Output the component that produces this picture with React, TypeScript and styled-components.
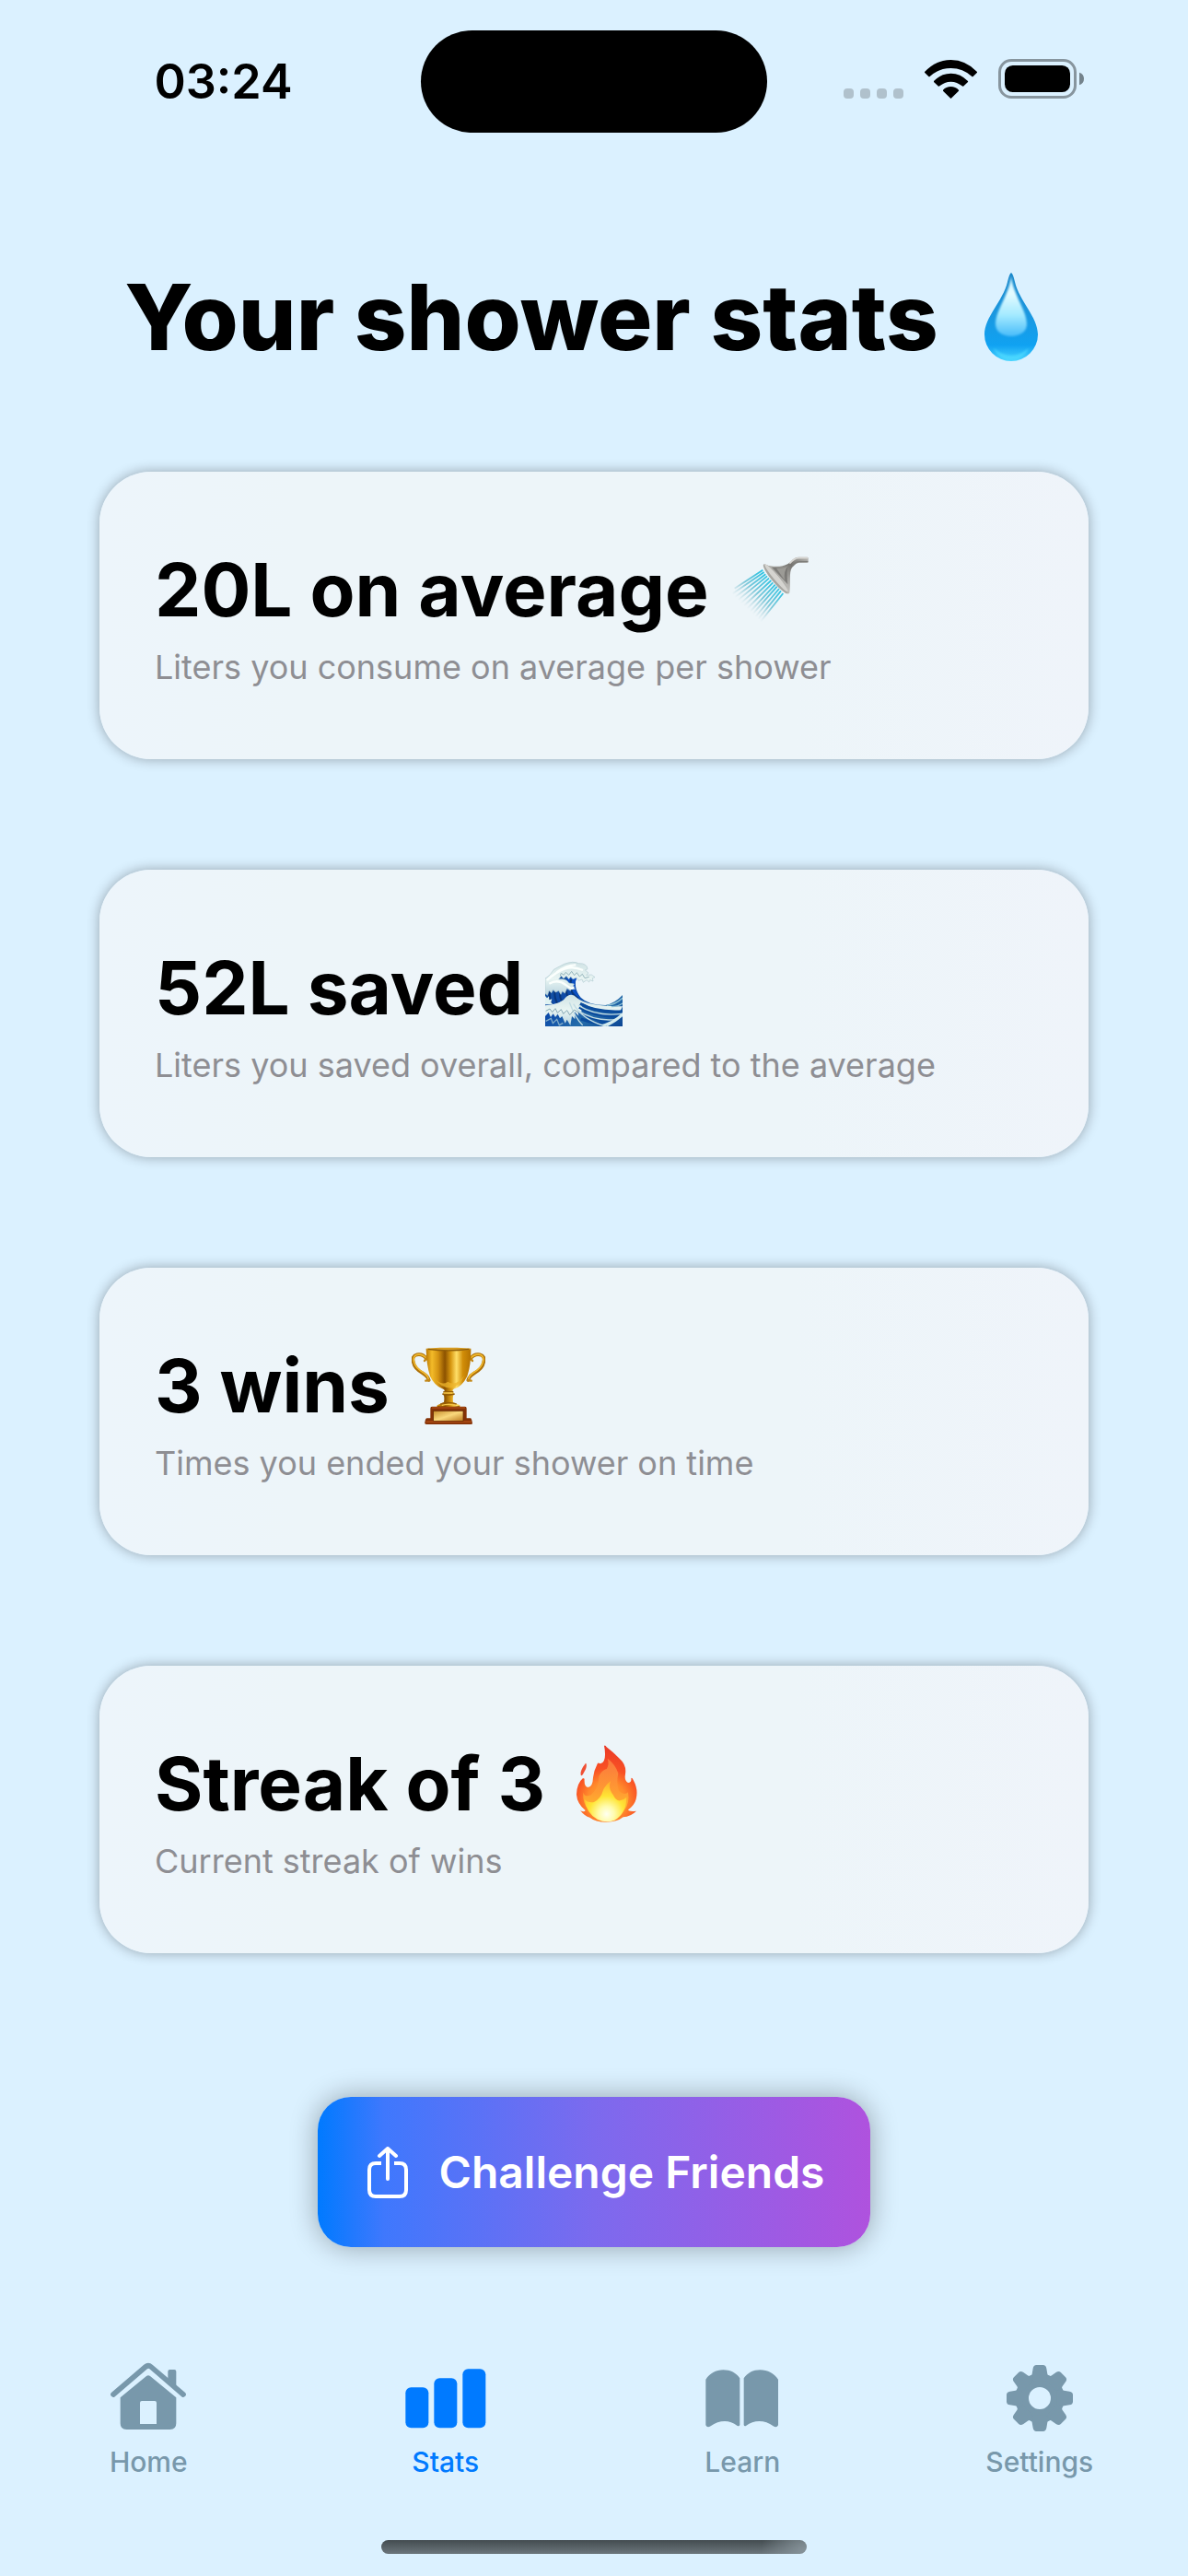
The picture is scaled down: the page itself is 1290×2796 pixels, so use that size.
import React from "react";
import styled, { createGlobalStyle } from "styled-components";

const GlobalStyle = createGlobalStyle`
  *, *::before, *::after { box-sizing: border-box; }
  body {
    margin: 0;
    background: #dbf1ff;
    color: #000;
    font-family: Inter, "Liberation Sans", sans-serif;
  }
`;

const Screen = styled.div`
  display: flex;
  flex-direction: column;
  min-height: 100vh;
  background: #dbf1ff;
`;

const StatusBar = styled.header`
  display: grid;
  grid-template-columns: 1fr 376px 1fr;
  align-items: center;
  padding-top: 33px;
`;

const Clock = styled.time`
  padding-left: 28px;
  text-align: center;
  font-size: 52px;
  line-height: 64px;
  font-weight: 600;
`;

const Island = styled.div`
  height: 111px;
  border-radius: 56px;
  background: #000;
`;

const StatusIcons = styled.div`
  display: flex;
  align-items: flex-end;
  padding: 0 0 6px 83px;

  svg { display: block; flex: none; }
  svg + svg { margin-left: 23px; }
`;

const Dots = styled.div`
  display: flex;
  gap: 7px;
  margin-right: 23px;
`;

const Dot = styled.span`
  width: 11px;
  height: 11px;
  border-radius: 4px;
  background: #b0c1cc;
`;

const Main = styled.main`
  display: flex;
  flex-direction: column;
  align-items: center;
  flex: 1;
  padding: 140px 108px 0;
`;

const Title = styled.h1`
  display: flex;
  align-items: center;
  gap: 50px;
  margin: 0 0 108px;
  padding-right: 28px;
  font-size: 99px;
  line-height: 120px;
  font-weight: 800;
  white-space: nowrap;

  svg { display: block; flex: none; }
`;

const CardList = styled.ul`
  display: flex;
  flex-direction: column;
  gap: 120px;
  width: 100%;
  margin: 0;
  padding: 0;
  list-style: none;
`;

const Card = styled.li`
  display: flex;
  flex-direction: column;
  padding: 76px 60px;
  border-radius: 56px;
  background: linear-gradient(90deg, #edf5fb, #edf5f9 20%, #edf5f9 70%, #eff4fa);
  box-shadow: 0 0 14px rgba(0, 0, 0, 0.32);
`;

const CardTitle = styled.h2`
  display: flex;
  align-items: center;
  gap: ${(p: { $gap: number }) => p.$gap}px;
  margin: 0;
  font-size: 80px;
  line-height: 104px;
  font-weight: 700;
  white-space: nowrap;

  svg { display: block; flex: none; }
`;

const CardNote = styled.p`
  margin: 8px 0 0;
  color: #8e8e93;
  font-size: 36px;
  line-height: 48px;
`;

const ShareButton = styled.button`
  display: flex;
  align-items: center;
  gap: 34px;
  height: 163px;
  margin-top: 156px;
  padding: 0 50px 0 54px;
  border: 0;
  border-radius: 36px;
  background: linear-gradient(90deg, #007aff, #3f78fd 12%, #7c6aee 50%, #af52de);
  box-shadow: 0 0 30px rgba(0, 0, 0, 0.33);
  color: #fff;
  font: 600 48px/64px Inter, "Liberation Sans", sans-serif;
  white-space: nowrap;

  svg { display: block; flex: none; }
`;

const TabBar = styled.nav`
  display: grid;
  grid-template-columns: repeat(4, 1fr);
`;

const Tab = styled.a`
  display: flex;
  flex-direction: column;
  align-items: center;
  gap: 13px;
  color: ${(p: { $active?: boolean }) => (p.$active ? "#007aff" : "#7898ab")};
  font-size: 30px;
  line-height: 40px;
  font-weight: 500;
  text-decoration: none;

  svg { display: block; }
`;

const HomeIndicator = styled.div`
  width: 462px;
  height: 15px;
  margin: 65px auto 24px;
  border-radius: 8px;
  background:
    radial-gradient(circle at 100% 100%, #88959c, rgba(136, 149, 156, 0) 50px),
    linear-gradient(#434c50, #6c767c);
`;

const WifiIcon = () => (
  <svg width="57" height="42" viewBox="342 75 171 126" aria-label="Wi-Fi" role="img">
    <path d="M342 114Q379 75 427.500 75T513 114Q514 115 513 116L500 129Q498 131 496 129Q467 102 427.500 102T359 129Q357 131 355 129L342 116Z" />
    <path d="M372 144Q396 119 427.500 119T483 144Q484 145 483 147L468 161Q466 162 464 160Q448 146 427.500 146T391 160Q389 162 387 161L372 147Z" />
    <path d="M402 173Q412 162 427.500 162T453 173Q454 175 453 176L430 199Q427.500 202 425 199L402 176Z" />
  </svg>
);

const BatteryIcon = () => (
  <svg width="93" height="43" viewBox="0 0 279 129" aria-label="Battery" role="img">
    <rect x="4.500" y="4.500" width="246" height="120" rx="38" fill="none" stroke="#87959e" strokeWidth="9" />
    <rect x="21" y="21" width="213" height="87" rx="26" />
    <path d="M264 44Q279 49 279 64.500T264 85Z" fill="#74838c" />
  </svg>
);

const Droplet = () => (
  <svg width="58" height="96" viewBox="0 0 58 96" aria-label="droplet" role="img">
    <defs>
      <linearGradient id="dropBody" x1="0" y1="0" x2="0" y2="1">
        <stop offset="0" stopColor="#1585c8" />
        <stop offset=".45" stopColor="#1b97df" />
        <stop offset=".82" stopColor="#10a2f2" />
        <stop offset="1" stopColor="#4ad4ff" />
      </linearGradient>
      <linearGradient id="dropShine" x1="0" y1="0" x2="0" y2="1">
        <stop offset="0" stopColor="#cdf3ff" />
        <stop offset=".3" stopColor="#e4fbff" />
        <stop offset=".65" stopColor="#a4eaff" />
        <stop offset="1" stopColor="#49bcfa" />
      </linearGradient>
      <filter id="dropSoft"><feGaussianBlur stdDeviation="1.200" /></filter>
    </defs>
    <path d="M29 0Q31 1 33 10C38 31 58 48 58 67A29 29 0 0 1 0 67C0 48 20 31 25 10Q27 1 29 0Z" fill="url(#dropBody)" />
    <path d="M29 3C31 24 46 41 46 56C46 64 38 69 29 69S12 64 12 56C12 41 27 24 29 3Z" fill="url(#dropShine)" filter="url(#dropSoft)" />
    <path d="M10 82Q29 98 48 82Q42 95 29 95T10 82Z" fill="#4ddaff" opacity=".75" filter="url(#dropSoft)" />
  </svg>
);

const Shower = () => (
  <svg width="84" height="72" viewBox="42 48 252 216" aria-label="shower" role="img">
    <defs>
      <linearGradient id="spray" gradientUnits="userSpaceOnUse" x1="185" y1="125" x2="95" y2="220">
        <stop offset="0" stopColor="#22c3e4" />
        <stop offset=".55" stopColor="#68bfd3" stopOpacity=".85" />
        <stop offset="1" stopColor="#a5c7d1" stopOpacity="0" />
      </linearGradient>
      <linearGradient id="showerMetal" x1="0" y1="1" x2="1" y2="0">
        <stop offset="0" stopColor="#e0dfdb" />
        <stop offset=".4" stopColor="#b4b3af" />
        <stop offset=".7" stopColor="#74736f" />
        <stop offset="1" stopColor="#bab9b5" />
      </linearGradient>
    </defs>
    <g stroke="url(#spray)" strokeWidth="5.500" fill="none">
      <path d="M145 92L53 152M149 99L47 169M154 106L48 185M159 112L52 200M165 119L60 212M172 126L69 222M178 133L79 233M185 140L89 243M191 146L99 250M198 153L111 256M204 160L124 259M211 168L137 261" />
    </g>
    <path d="M151 74C175 82 205 84 227 72L236 65Q248 50 262 50H290Q293 50 293 53V65Q293 68 290 68H262Q253 69 246 78L240 84C229 99 237 136 232 166Q230 173 218 167Z" fill="url(#showerMetal)" />
    <path d="M232 71Q249 52 264 53H291" fill="none" stroke="#d7d6d2" strokeWidth="5" />
    <path d="M240 80Q251 65 264 65H292" fill="none" stroke="#7d7d79" strokeWidth="4" />
    <path d="M174 83Q216 87 226 80Q222 93 226 139Z" fill="#6b6a66" opacity=".7" />
    <path d="M189 86Q215 88 227 79Q212 96 216 125Z" fill="#9c9b96" />
    <ellipse cx="187" cy="120" rx="13" ry="61" fill="#a7a6a1" transform="rotate(-40 187 120)" />
    <ellipse cx="189" cy="118" rx="8" ry="59" fill="#d5d4d0" transform="rotate(-40 189 118)" />
  </svg>
);

const Wave = () => (
  <svg width="84" height="84" viewBox="42 0 252 252" aria-label="wave" role="img">
    <defs>
      <linearGradient id="sea" x1="0" y1="0" x2="1" y2="1">
        <stop offset="0" stopColor="#245f9b" />
        <stop offset=".4" stopColor="#0b48a8" />
        <stop offset=".7" stopColor="#256caa" />
        <stop offset="1" stopColor="#0b4594" />
      </linearGradient>
      <linearGradient id="foam" x1="0" y1="0" x2="0" y2="1">
        <stop offset="0" stopColor="#d0e3e5" />
        <stop offset=".5" stopColor="#e9f5f3" />
        <stop offset="1" stopColor="#bad5df" />
      </linearGradient>
    </defs>
    <path d="M42 97L88 65L147 81Q130 125 158 158Q183 183 238 183Q268 178 294 150V252H42Z" fill="url(#sea)" />
    <path d="M113 93L145 95Q127 130 161 164Q115 158 113 93Z" fill="#0b4fc3" />
    <path d="M57 136Q54 165 64 182M74 134Q70 160 83 179M91 141Q88 159 99 174M111 136Q111 153 123 165M127 98Q115 139 150 161" fill="none" stroke="#09367b" strokeWidth="6" />
    <path d="M42 97Q60 85 70 67Q88 57 104 49Q133 38 151 47Q178 46 180 65L172 69L183 78L176 85L193 84L204 92L196 95L198 105L188 101L185 108L177 101L166 109L162 99L151 103L145 93L132 98L125 90L119 98L111 88L102 96L94 87L86 99Q111 96 119 111L136 114L132 122L139 131L128 129L124 136L113 128L106 144L98 137L93 148L86 136L76 141L68 133L62 143L55 135L49 151L42 145Z" fill="url(#foam)" stroke="#b2cbd2" strokeWidth="2" />
    <path d="M48 102Q77 75 105 65T165 69M55 113Q83 97 109 117T133 122M79 76Q112 51 142 52" fill="none" stroke="#fbfffd" strokeWidth="7" />
    <path d="M91 87L94 79L103 85L109 76L119 85L128 73L137 86L145 77L154 90L163 82L171 95L185 91" fill="none" stroke="#96b6bd" strokeWidth="3" />
    <path d="M42 184Q81 181 102 166Q124 137 145 159Q177 187 294 187L286 203Q226 210 165 178Q158 195 160 215L149 203L151 218L138 205L139 229L129 219L124 249L113 230L107 242L97 219L90 226L83 212L75 222L68 211L60 222L53 207L42 219Z" fill="url(#foam)" />
    <path d="M156 178Q207 208 294 203M153 190Q205 224 294 219M157 208Q204 234 273 239M158 228Q201 243 244 244" fill="none" stroke="#0b4c9d" strokeWidth="9" />
    <path d="M150 184Q213 222 291 211M147 200Q209 239 277 229M134 179Q163 231 240 252M121 174Q142 229 164 248" fill="none" stroke="#c1dce3" strokeWidth="4" />
    <path d="M219 248Q262 238 294 207V220Q270 241 246 252Z" fill="#d4ebee" />
    <path d="M42 153L48 160L54 154L55 166L64 163L61 174L67 181H42Z" fill="#dff2f2" />
    <path d="M243 184Q270 182 294 160M258 188Q279 188 294 177" fill="none" stroke="#8fc3d7" strokeWidth="4" />
    <path d="M44 202L57 195L65 206L75 194L82 208L94 197L101 211L113 200L122 215L137 198L151 208" fill="none" stroke="#87a9b5" strokeWidth="3" />
    <path d="M44 235L61 226L67 242L80 229L88 248L100 241" fill="none" stroke="#81acc8" strokeWidth="4" />
  </svg>
);

const Trophy = () => (
  <svg width="80" height="84" viewBox="51 35 240 252" aria-label="trophy" role="img">
    <defs>
      <linearGradient id="gold" x1="0" y1="0" x2="1" y2="0">
        <stop offset="0" stopColor="#b97600" />
        <stop offset=".13" stopColor="#f3bb29" />
        <stop offset=".27" stopColor="#d49312" />
        <stop offset=".42" stopColor="#8c5200" />
        <stop offset=".55" stopColor="#d79710" />
        <stop offset=".68" stopColor="#ffdf68" />
        <stop offset=".82" stopColor="#d18d08" />
        <stop offset="1" stopColor="#b37100" />
      </linearGradient>
      <linearGradient id="plate" x1="0" y1="0" x2="1" y2="1">
        <stop offset="0" stopColor="#c78e2b" />
        <stop offset=".5" stopColor="#f9d87c" />
        <stop offset="1" stopColor="#bd7b20" />
      </linearGradient>
    </defs>
    <g fill="none" strokeLinecap="round">
      <path d="M99 73Q88 57 69 60Q50 65 57 86Q60 105 88 121Q104 131 107 143M243 73Q254 57 273 60Q292 65 285 86Q282 105 254 121Q238 131 235 143" stroke="#ad7008" strokeWidth="11" />
      <path d="M98 71Q86 57 69 60Q53 66 59 85Q63 103 90 119Q106 130 106 142M244 71Q256 57 273 60Q289 66 283 85Q279 103 252 119Q236 130 236 142" stroke="#f1b92e" strokeWidth="5" />
      <path d="M93 80L99 72M249 80L243 72M97 145L108 143M245 145L234 143" stroke="#c38716" strokeWidth="7" />
    </g>
    <path d="M98 40H244Q245 92 232 130Q216 163 190 171Q180 176 188 184V190Q184 195 186 215L208 225Q211 233 203 235H139Q131 233 134 225L156 215Q159 195 154 190V184Q164 176 151 171Q124 159 111 130Q99 92 98 40Z" fill="url(#gold)" />
    <ellipse cx="171" cy="42" rx="73" ry="5" fill="#d69b21" />
    <path d="M104 42Q171 51 238 42" fill="none" stroke="#8f5d09" strokeWidth="4" />
    <path d="M124 135Q147 164 169 148Q195 166 223 128Q207 162 183 168Q148 172 124 135Z" fill="#edb62c" opacity=".75" />
    <path d="M154 181H187M151 188Q171 194 191 188M145 221Q171 212 197 221M135 229Q171 237 207 229" fill="none" stroke="#925a04" strokeWidth="4" />
    <path d="M155 185H184M149 225Q171 219 194 225" fill="none" stroke="#f6c648" strokeWidth="4" />
    <path d="M117 229H225Q230 229 230 235V267H243Q247 268 249 285Q249 287 243 287H99Q92 287 94 280Q96 267 101 267H112V235Q112 229 117 229Z" fill="#843207" />
    <path d="M98 279H245" stroke="#a94813" strokeWidth="6" />
    <path d="M117 233H225" stroke="#a94a13" strokeWidth="4" />
    <rect x="122" y="243" width="97" height="33" fill="url(#plate)" stroke="#5e2502" strokeWidth="2" />
  </svg>
);

const Fire = () => (
  <svg width="66" height="84" viewBox="80 39 198 252" aria-label="fire" role="img">
    <defs>
      <radialGradient id="flameOuter" gradientUnits="userSpaceOnUse" cx="179" cy="220" r="180">
        <stop offset="0" stopColor="#ffb52b" />
        <stop offset=".35" stopColor="#ff8a2c" />
        <stop offset=".58" stopColor="#f95124" />
        <stop offset="1" stopColor="#e93827" />
      </radialGradient>
      <linearGradient id="flameMid" x1="0" y1="0" x2="0" y2="1">
        <stop offset="0" stopColor="#fa773e" />
        <stop offset=".55" stopColor="#ff9b32" />
        <stop offset="1" stopColor="#ffc72a" />
      </linearGradient>
      <radialGradient id="flameCore" gradientUnits="userSpaceOnUse" cx="178" cy="264" r="100">
        <stop offset="0" stopColor="#fffff0" />
        <stop offset=".25" stopColor="#fffcae" />
        <stop offset=".58" stopColor="#ffe536" />
        <stop offset="1" stopColor="#ffb52c" />
      </radialGradient>
    </defs>
    <path d="M110 98Q115 101 110 118L101 134Q97 141 94 137Q90 123 110 98Z" fill="#ef4f34" />
    <path d="M170 42Q173 37 178 46Q199 62 220 83Q244 104 239 134Q235 156 248 162Q260 162 258 148Q260 143 265 153Q282 184 274 215Q269 235 248 250Q251 257 275 254Q257 272 232 274Q212 290 177 290T123 275Q107 271 92 252Q105 260 109 252Q82 230 80 200Q81 164 101 147L106 149Q104 174 117 177Q133 177 134 145Q136 124 147 103Q149 96 153 98L158 100Q174 96 173 67Q173 55 170 42Z" fill="url(#flameOuter)" />
    <path d="M181 83Q206 101 216 131Q209 163 218 188Q237 205 248 193Q254 230 235 252Q213 279 177 279Q140 279 119 251Q99 228 102 193Q106 212 128 201Q154 177 153 141Q161 122 179 116Q187 101 181 83Z" fill="url(#flameMid)" />
    <path d="M191 157Q182 180 199 201Q209 222 222 220Q237 216 243 209Q243 261 204 284Q177 294 149 282Q112 262 106 216Q119 229 137 225Q160 212 166 188Q173 171 191 157Z" fill="url(#flameCore)" />
  </svg>
);

const ShareIcon = () => (
  <svg width="44" height="56" viewBox="0 0 44 56" fill="none" stroke="#fff" strokeWidth="4" strokeLinecap="round" strokeLinejoin="round" aria-hidden="true">
    <path d="M15 18H9Q2 18 2 25V47Q2 54 9 54H35Q42 54 42 47V25Q42 18 35 18H29" strokeLinecap="butt" />
    <path d="M22 35V2M13 10L22 2L31 10" />
  </svg>
);

const HouseIcon = () => (
  <svg width="82" height="76" viewBox="89 36 246 228" fill="currentColor" aria-hidden="true">
    <path d="M98 144L203 54Q212 46 221 54L326 144" fill="none" stroke="currentColor" strokeWidth="17" strokeLinecap="round" />
    <path d="M276 94V69Q276 63 282 63H297Q303 63 303 69V119Z" />
    <path fillRule="evenodd" d="M121 154L206 84Q212 79 218 84L303 154V238Q303 258 283 258H141Q121 258 121 238ZM185 240H239V171Q239 165 233 165H191Q185 165 185 171Z" />
  </svg>
);

const BarsIcon = () => (
  <svg width="88" height="76" viewBox="1049 38 264 228" fill="currentColor" aria-hidden="true">
    <rect x="1050" y="123" width="75" height="132" rx="18" />
    <rect x="1143" y="93" width="75" height="162" rx="18" />
    <rect x="1236" y="63" width="75" height="192" rx="18" />
  </svg>
);

const BookIcon = () => (
  <svg width="80" height="76" viewBox="80 38 240 228" fill="currentColor" aria-hidden="true">
    <path d="M81 97C94 77 114 66 138 66C161 66 181 76 192 93V245Q190 251 184 248Q164 233 143 233Q119 233 97 249Q86 256 81 246Z" />
    <path d="M205 93C217 76 235 66 258 66C283 66 304 77 317 97V246Q312 256 301 249Q280 233 255 233Q232 233 212 248Q207 251 205 245Z" />
  </svg>
);

const GearIcon = () => (
  <svg width="72" height="76" viewBox="-108 -120 216 228" fill="currentColor" aria-hidden="true">
    <circle r="58" fill="none" stroke="currentColor" strokeWidth="44" />
    {[0, 45, 90, 135, 180, 225, 270, 315].map((angle) => (
      <path key={angle} transform={`rotate(${angle})`} d="M-36 -69Q-27 -70 -25 -79L-22 -97Q-20 -108 -11 -108H11Q20 -108 22 -97L25 -79Q27 -70 36 -69L20 -55H-20Z" />
    ))}
  </svg>
);

const stats = [
  { title: "20L on average", note: "Liters you consume on average per shower", icon: <Shower />, gap: 24 },
  { title: "52L saved", note: "Liters you saved overall, compared to the average", icon: <Wave />, gap: 24 },
  { title: "3 wins", note: "Times you ended your shower on time", icon: <Trophy />, gap: 24 },
  { title: "Streak of 3", note: "Current streak of wins", icon: <Fire />, gap: 34 },
];

const tabs = [
  { label: "Home", icon: <HouseIcon /> },
  { label: "Stats", icon: <BarsIcon />, active: true },
  { label: "Learn", icon: <BookIcon /> },
  { label: "Settings", icon: <GearIcon /> },
];

export default function App() {
  return (
    <Screen>
      <GlobalStyle />
      <StatusBar>
        <Clock>03:24</Clock>
        <Island />
        <StatusIcons>
          <Dots><Dot /><Dot /><Dot /><Dot /></Dots>
          <WifiIcon />
          <BatteryIcon />
        </StatusIcons>
      </StatusBar>
      <Main>
        <Title>Your shower stats<Droplet /></Title>
        <CardList>
          {stats.map((s) => (
            <Card key={s.title}>
              <CardTitle $gap={s.gap}>{s.title}{s.icon}</CardTitle>
              <CardNote>{s.note}</CardNote>
            </Card>
          ))}
        </CardList>
        <ShareButton type="button"><ShareIcon />Challenge Friends</ShareButton>
      </Main>
      <TabBar aria-label="Main">
        {tabs.map((t) => (
          <Tab key={t.label} href={`#${t.label.toLowerCase()}`} $active={t.active} aria-current={t.active ? "page" : undefined}>
            {t.icon}
            {t.label}
          </Tab>
        ))}
      </TabBar>
      <HomeIndicator />
    </Screen>
  );
}
